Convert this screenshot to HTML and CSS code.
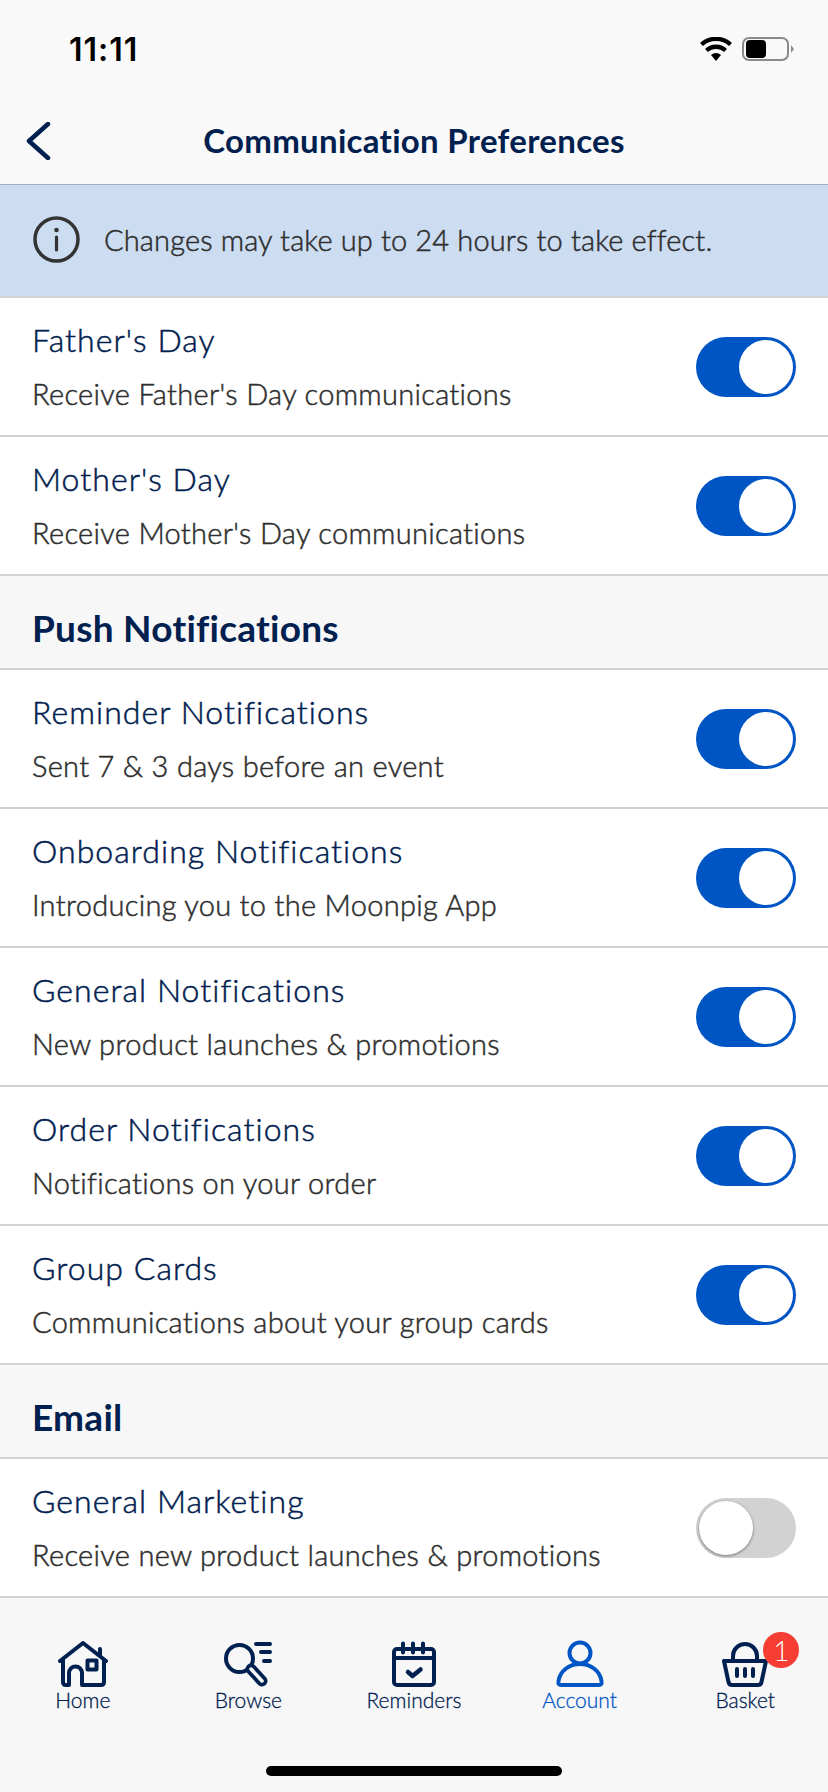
FILE: index.html
```html
<!DOCTYPE html>
<html lang="en">
<head>
<meta charset="utf-8">
<title>Communication Preferences</title>
<link rel="stylesheet" href="styles.css">
</head>
<body>
<div class="screen">
  <header class="top">
    <div class="status">
      <span class="time">11:11</span>
      <div class="status-icons">
        <svg class="wifi" width="32" height="24" viewBox="0 0 32 24"><path d="M16 24l-5-6a7.500 7.500 0 0 1 10 0z" fill="#000"/><path d="M6.500 13.500a14 14 0 0 1 19 0M1.500 7.500a21.500 21.500 0 0 1 29 0" fill="none" stroke="#000" stroke-width="4.400"/></svg>
        <svg class="battery" width="52" height="24" viewBox="0 0 52 24"><rect x="1" y="1" width="45" height="22" rx="6" fill="none" stroke="#8a8a8a" stroke-width="2"/><rect x="4" y="3" width="20" height="18" rx="4" fill="#000"/><path d="M49 8l3 4-3 4z" fill="#8a8a8a"/></svg>
      </div>
    </div>
    <div class="nav">
      <svg class="back" width="26" height="38" viewBox="0 0 26 38"><path d="M23 2L4 19l19 17" fill="none" stroke="#00204f" stroke-width="4.500" stroke-linecap="round" stroke-linejoin="round"/></svg>
      <h1 class="nav-title">Communication Preferences</h1>
    </div>
  </header>

  <div class="banner">
    <svg width="47" height="47" viewBox="0 0 47 47"><circle cx="23.500" cy="23.500" r="21.500" fill="none" stroke="#333" stroke-width="3.500"/><circle cx="23.500" cy="14" r="2.300" fill="#333"/><path d="M23.500 21v13" stroke="#333" stroke-width="3.200" stroke-linecap="round"/></svg>
    <span class="banner-text">Changes may take up to 24 hours to take effect.</span>
  </div>

  <main class="list">
    <div class="row"><div class="row-text"><div class="row-title">Father's Day</div><div class="row-sub">Receive Father's Day communications</div></div><div class="toggle on"><span class="thumb"></span></div></div>
    <div class="row"><div class="row-text"><div class="row-title">Mother's Day</div><div class="row-sub">Receive Mother's Day communications</div></div><div class="toggle on"><span class="thumb"></span></div></div>
    <h2 class="section">Push Notifications</h2>
    <div class="row"><div class="row-text"><div class="row-title">Reminder Notifications</div><div class="row-sub">Sent 7 &amp; 3 days before an event</div></div><div class="toggle on"><span class="thumb"></span></div></div>
    <div class="row"><div class="row-text"><div class="row-title">Onboarding Notifications</div><div class="row-sub">Introducing you to the Moonpig App</div></div><div class="toggle on"><span class="thumb"></span></div></div>
    <div class="row"><div class="row-text"><div class="row-title">General Notifications</div><div class="row-sub">New product launches &amp; promotions</div></div><div class="toggle on"><span class="thumb"></span></div></div>
    <div class="row"><div class="row-text"><div class="row-title">Order Notifications</div><div class="row-sub">Notifications on your order</div></div><div class="toggle on"><span class="thumb"></span></div></div>
    <div class="row"><div class="row-text"><div class="row-title">Group Cards</div><div class="row-sub">Communications about your group cards</div></div><div class="toggle on"><span class="thumb"></span></div></div>
    <h2 class="section">Email</h2>
    <div class="row"><div class="row-text"><div class="row-title">General Marketing</div><div class="row-sub">Receive new product launches &amp; promotions</div></div><div class="toggle off"><span class="thumb"></span></div></div>
  </main>

  <nav class="tabs">
    <div class="tab">
      <svg width="50" height="48" viewBox="0 0 50 48" fill="none" stroke="#00204f" stroke-width="4" stroke-linejoin="round" stroke-linecap="round"><path d="M2 21L25 3l23 18M42 9v7"/><path d="M5 20v22q0 3 3 3h3V33a6.500 6.500 0 0 1 13 0v12h19q3 0 3-3V20"/><rect x="29.500" y="20.500" width="9" height="9"/></svg>
      <span class="tab-label">Home</span>
    </div>
    <div class="tab">
      <svg width="50" height="48" viewBox="0 0 50 48" fill="none" stroke="#00204f" stroke-linecap="round"><circle cx="16.500" cy="18.500" r="13.500" stroke-width="4"/><path d="M28 29l11 12" stroke-width="11"/><path d="M28 29l11 12" stroke="#f7f7f8" stroke-width="3.500"/><path d="M33 4h14M38 12h9M41 21h6" stroke-width="4"/></svg>
      <span class="tab-label">Browse</span>
    </div>
    <div class="tab">
      <svg width="50" height="48" viewBox="0 0 50 48" fill="none" stroke="#00204f" stroke-width="4" stroke-linecap="round" stroke-linejoin="round"><rect x="5" y="9" width="40" height="36" rx="3"/><path d="M5 18h40"/><path d="M14 3.500v9M24 3.500v9M34 3.500v9"/><path d="M19 32l4.500 4 8-6.500" stroke-width="4.500"/></svg>
      <span class="tab-label">Reminders</span>
    </div>
    <div class="tab active">
      <svg width="50" height="48" viewBox="0 0 50 48" fill="none" stroke="#0055c4" stroke-width="4" stroke-linejoin="round"><circle cx="25" cy="13" r="10.500"/><path d="M7 45c-3 0-4-1-3.500-4C5 31 14 24 25 24s20 7 21.500 17c.5 3-.5 4-3.500 4z"/></svg>
      <span class="tab-label">Account</span>
    </div>
    <div class="tab">
      <svg width="50" height="48" viewBox="0 0 50 48" fill="none" stroke="#00204f" stroke-width="4" stroke-linecap="round" stroke-linejoin="round"><path d="M13 20v-4a12 12 0 0 1 24 0v4"/><path d="M4 21h42l-4.500 21q-.7 3-3.500 3H12q-2.800 0-3.500-3z"/><path d="M17 29v7M25 29v7M33 29v7"/></svg>
      <span class="tab-label">Basket</span>
      <span class="badge">1</span>
    </div>
    <span class="home-bar"></span>
  </nav>
</div>
</body>
</html>
```

FILE: styles.css
```css
* { box-sizing: border-box; }
html, body { margin: 0; padding: 0; }
body { font-family: "Lato", "Liberation Sans", sans-serif; background: #fff; }
.screen { width: 828px; height: 1792px; display: flex; flex-direction: column; overflow: hidden; }
.top { height: 185px; background: #f9f9f9; border-bottom: 1px solid #9fb0c8; display: flex; flex-direction: column; }
.status { height: 98px; padding: 0 34px 0 69px; display: flex; align-items: center; justify-content: space-between; }
.time { font-family: "Inter", sans-serif; font-weight: 600; font-size: 32px; color: #000; letter-spacing: 1px; }
.status-icons { display: flex; align-items: center; gap: 10px; }
.wifi, .battery { display: block; }
.nav { position: relative; flex: 1; display: flex; align-items: center; justify-content: center; padding-bottom: 2px; }
.back { position: absolute; left: 25px; top: 24px; }
.nav-title { margin: 0; font-size: 33px; font-weight: 700; color: #00204f; letter-spacing: 0.3px; }
.banner { height: 113px; background: #ccddf2; border-bottom: 2px solid #d2d2d2; padding: 0 33px 2px; display: flex; align-items: center; gap: 24px; }
.banner svg { display: block; flex: none; }
.banner-text { font-size: 29px; font-weight: 300; color: #2e2e2e; letter-spacing: 0.15px; -webkit-text-stroke: 0.5px #2e2e2e; }
.list { flex: 1; display: flex; flex-direction: column; }
.row { height: 139px; background: #fff; border-bottom: 2px solid #d2d2d2; padding: 0 32px; display: flex; align-items: center; justify-content: space-between; }
.row-text { display: flex; flex-direction: column; gap: 17px; padding-bottom: 1px; }
.row-title { font-size: 32px; line-height: 38px; font-weight: 300; color: #00204f; letter-spacing: 1.05px; -webkit-text-stroke: 0.5px #00204f; }
.row-sub { font-size: 29px; line-height: 36px; font-weight: 300; color: #2e2e2e; letter-spacing: 0.3px; -webkit-text-stroke: 0.5px #2e2e2e; }
.section { margin: 0; height: 94px; padding: 11px 32px 0; background: #f7f7f8; border-bottom: 2px solid #d2d2d2; display: flex; align-items: center; font-size: 37px; font-weight: 700; color: #00204f; letter-spacing: 0.25px; }
.toggle { width: 100px; height: 60px; border-radius: 30px; padding: 3px; display: flex; flex: none; }
.toggle.on { background: #0055c4; justify-content: flex-end; }
.toggle.off { background: #d2d2d2; justify-content: flex-start; }
.thumb { width: 54px; height: 54px; border-radius: 50%; background: #fff; }
.toggle.off .thumb { box-shadow: 0 1px 3px rgba(0,0,0,.45); }
.tabs { position: relative; height: 194px; background: #f7f7f8; display: grid; grid-template-columns: repeat(5, 1fr); align-items: start; padding-top: 42px; }
.tab { position: relative; display: flex; flex-direction: column; align-items: center; color: #00204f; }
.tab svg { display: block; }
.tab.active { color: #0055c4; }
.tab-label { font-size: 21px; line-height: 24px; margin-top: 0; font-weight: 300; -webkit-text-stroke: 0.3px currentColor; }
.badge { position: absolute; left: 101px; top: -8px; width: 36px; height: 36px; border-radius: 50%; background: #f53d33; color: #fff; font-size: 28px; font-weight: 300; display: flex; align-items: center; justify-content: center; }
.home-bar { position: absolute; left: 266px; bottom: 16px; width: 296px; height: 10px; border-radius: 5px; background: #000; }
```
